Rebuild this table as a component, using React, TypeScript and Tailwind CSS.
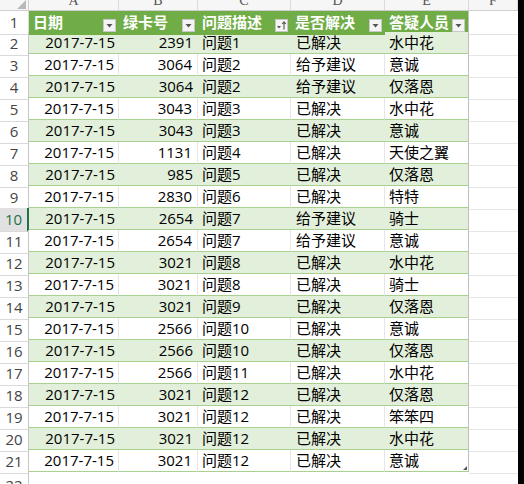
import React from 'react';

const rows: string[][] = [
  ['2017-7-15', '2391', '问题1', '已解决', '水中花'],
  ['2017-7-15', '3064', '问题2', '给予建议', '意诚'],
  ['2017-7-15', '3064', '问题2', '给予建议', '仅落恩'],
  ['2017-7-15', '3043', '问题3', '已解决', '水中花'],
  ['2017-7-15', '3043', '问题3', '已解决', '意诚'],
  ['2017-7-15', '1131', '问题4', '已解决', '天使之翼'],
  ['2017-7-15', '985', '问题5', '已解决', '仅落恩'],
  ['2017-7-15', '2830', '问题6', '已解决', '特特'],
  ['2017-7-15', '2654', '问题7', '给予建议', '骑士'],
  ['2017-7-15', '2654', '问题7', '给予建议', '意诚'],
  ['2017-7-15', '3021', '问题8', '已解决', '水中花'],
  ['2017-7-15', '3021', '问题8', '已解决', '骑士'],
  ['2017-7-15', '3021', '问题9', '已解决', '仅落恩'],
  ['2017-7-15', '2566', '问题10', '已解决', '意诚'],
  ['2017-7-15', '2566', '问题10', '已解决', '仅落恩'],
  ['2017-7-15', '2566', '问题11', '已解决', '水中花'],
  ['2017-7-15', '3021', '问题12', '已解决', '仅落恩'],
  ['2017-7-15', '3021', '问题12', '已解决', '笨笨四'],
  ['2017-7-15', '3021', '问题12', '已解决', '水中花'],
  ['2017-7-15', '3021', '问题12', '已解决', '意诚'],
];

const headers = ['日期', '绿卡号', '问题描述', '是否解决', '答疑人员'];
const letters = ['A', 'B', 'C', 'D', 'E', 'F'];
const grid = 'grid grid-cols-[29px_90px_79px_93px_94px_84px_49px]';
const font = { fontFamily: '"Open Sans", "Noto Sans CJK SC", sans-serif' };

function FilterButton({ sorted }: { sorted?: boolean }) {
  return (
    <div className="absolute right-[3px] bottom-[3px] w-[13px] h-[13px] bg-[#f4f4f4] border border-[#c8c8c8] flex items-center justify-center">
      {sorted ? (
        <svg width="11" height="11" viewBox="0 0 11 11">
          <path d="M1 6h4l-2 2.5z" fill="#555" />
          <path d="M8 9.5V2M6.2 4L8 1.8 9.8 4" stroke="#555" strokeWidth="1.1" fill="none" />
        </svg>
      ) : (
        <svg width="9" height="9" viewBox="0 0 9 9">
          <path d="M1.5 3h6L4.5 6.5z" fill="#555" />
        </svg>
      )}
    </div>
  );
}

export default function App() {
  return (
    <div className="flex w-[524px] h-[484px] overflow-hidden bg-white" style={font}>
      <div className="w-[518px] flex flex-col">
        {/* column letters, cut at the top */}
        <div className={`${grid} h-[11px] bg-[#f6f6f6] border-b border-[#cfcfcf]`}>
          <div className="relative border-r border-[#cfcfcf]">
            <div className="absolute right-[2px] bottom-[1px] w-0 h-0 border-l-[9px] border-l-transparent border-b-[9px] border-b-[#b9b9b9]" />
          </div>
          {letters.map((l) => (
            <div key={l} className="relative overflow-hidden border-r border-[#dadada]">
              <span className="absolute left-0 right-0 -top-[7px] text-center text-[14px] leading-[16px] text-[#555] font-['Liberation_Serif',serif]">
                {l}
              </span>
            </div>
          ))}
        </div>

        {/* header row */}
        <div className={`${grid} h-[21px]`}>
          <div className="flex items-center justify-center text-[15px] text-[#444] border-r border-[#c6c6c6] border-b border-[#dadada]">1</div>
          {headers.map((h, i) => (
            <div key={h} className={`relative flex items-center pl-1 bg-[#70ad47] text-white font-bold text-[15px] leading-none ${i === 4 ? 'border-r border-[#bfbfbf]' : ''}`}>
              {h}
              <FilterButton sorted={i === 2} />
            </div>
          ))}
          <div className="border-b border-[#e2e2e2]" />
        </div>

        {rows.map((r, idx) => {
          const n = idx + 2;
          const green = n % 2 === 0;
          const sel = n === 10;
          const cell = `flex items-center h-[22px] border-b border-[#a9d08e] text-[15px] text-black leading-none ${green ? 'bg-[#e2efda]' : 'bg-white'}`;
          const vline = green ? '' : 'border-r border-r-[#e6e6e6]';
          return (
            <div key={n} className={`${grid} h-[22px]`}>
              <div
                className={`flex items-center justify-center text-[15px] border-b border-[#dadada] ${
                  sel ? 'bg-[#e1e1e1] text-[#217346] border-r-2 border-r-[#217346]' : 'text-[#444] border-r border-r-[#c6c6c6]'
                }`}
              >
                {n}
              </div>
              <div className={`${cell} ${vline} justify-end pr-1`}>{r[0]}</div>
              <div className={`${cell} ${vline} justify-end pr-[5px]`}>{r[1]}</div>
              <div className={`${cell} ${vline} pl-1`}>{r[2]}</div>
              <div className={`${cell} ${vline} pl-[5px]`}>{r[3]}</div>
              <div className={`${cell} relative pl-1 border-r border-r-[#bfbfbf]`}>
                {r[4]}
                {n === 21 && (
                  <div className="absolute right-[1px] bottom-[1px] w-0 h-0 border-l-[4px] border-l-transparent border-b-[4px] border-b-[#555]" />
                )}
              </div>
              <div className="border-b border-[#e6e6e6]" />
            </div>
          );
        })}

        {/* row 22, cut at the bottom */}
        <div className={`${grid} h-[12px]`}>
          <div className="relative overflow-hidden border-r border-[#c6c6c6]">
            <span className="absolute left-0 right-0 top-[6px] text-center text-[15px] leading-none text-[#444]">22</span>
          </div>
          <div className="col-span-6" />
        </div>
      </div>
      <div className="w-[6px] bg-black" />
    </div>
  );
}
